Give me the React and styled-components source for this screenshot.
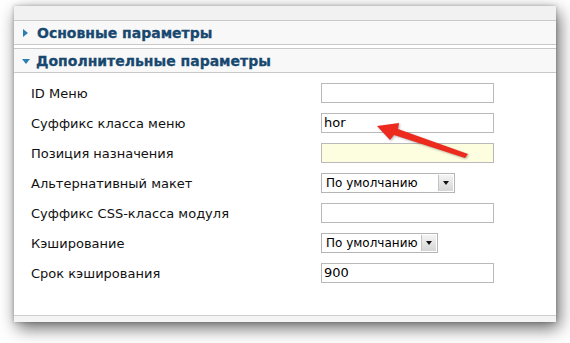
import React from "react";
import styled, { createGlobalStyle } from "styled-components";

const GlobalStyle = createGlobalStyle`
  html, body {
    margin: 0;
    padding: 0;
    background: #ffffff;
  }
  body {
    font-family: "DejaVu Sans", "Liberation Sans", Arial, sans-serif;
  }
`;

const Page = styled.div`
  width: 570px;
  height: 343px;
  padding: 6px 0 0 14px;
  box-sizing: border-box;
  overflow: hidden;
`;

const Panel = styled.div`
  width: 542px;
  height: 316px;
  background: #ffffff;
  display: flex;
  flex-direction: column;
  box-shadow: 3px 6px 16px rgba(0, 0, 0, 0.6), 0 0 4px rgba(0, 0, 0, 0.25);
`;

const TopBar = styled.div`
  height: 14px;
  background: #f1f1f1;
  border-bottom: 1px solid #c9c9c9;
`;

const SectionHeader = styled.div`
  height: 23px;
  background: #f8f8f8;
  border-top: ${(p) => (p.$first ? "none" : "1px solid #c9c9c9")};
  border-bottom: 1px solid #c9c9c9;
  margin-top: ${(p) => (p.$first ? "0" : "3px")};
  display: flex;
  align-items: center;
  padding-left: 8px;
  gap: 6px;
  font-size: 14px;
  font-weight: bold;
  color: #184870;
  -webkit-text-stroke: 0.3px #184870;
`;

const Triangle = styled.span`
  width: 0;
  height: 0;
  ${(p) =>
    p.$open
      ? `border-left: 4px solid transparent;
         border-right: 4px solid transparent;
         border-top: 5px solid #2d7fb0;
         margin: 2px 0 0 0;`
      : `border-top: 4px solid transparent;
         border-bottom: 4px solid transparent;
         border-left: 5px solid #2d7fb0;
         margin: 0 3px 0 1px;`}
`;

const Body = styled.div`
  flex: 1;
  padding: 5px 0 0 17px;
  display: flex;
  flex-direction: column;
  position: relative;
`;

const Row = styled.div`
  height: 30px;
  display: grid;
  grid-template-columns: 290px auto;
  align-items: center;
`;

const Label = styled.span`
  font-size: 13px;
  color: #111;
`;

const TextInput = styled.div`
  width: 173px;
  height: 20px;
  box-sizing: border-box;
  border: 1px solid #b9b9b9;
  background: ${(p) => (p.$yellow ? "#fdfddf" : "#ffffff")};
  font-size: 13px;
  padding: 1px 0 0 2px;
  color: #000;
`;

const Select = styled.div`
  width: ${(p) => p.$width}px;
  height: 20px;
  box-sizing: border-box;
  border: 1px solid #b5b5b5;
  background: #fff;
  display: flex;
  align-items: stretch;
  font-size: 12px;
  color: #000;
`;

const SelectText = styled.span`
  flex: 1;
  padding: 2px 0 0 4px;
  white-space: nowrap;
`;

const SelectButton = styled.span`
  width: 14px;
  margin: 1px;
  background: linear-gradient(#f4f4f4, #d6d6d6);
  border-left: 1px solid #c4c4c4;
  display: flex;
  align-items: center;
  justify-content: center;
  &::after {
    content: "";
    border-left: 3px solid transparent;
    border-right: 3px solid transparent;
    border-top: 4px solid #111;
  }
`;

const BottomBar = styled.div`
  height: 6px;
  background: #f4f4f4;
  border-top: 1px solid #cfcfcf;
`;

const Arrow = styled.svg`
  position: absolute;
  left: 363px;
  top: 50px;
  overflow: visible;
  filter: drop-shadow(1px 1px 1px rgba(0, 0, 0, 0.3));
`;

const fields = [
  { label: "ID Меню", type: "text" },
  { label: "Суффикс класса меню", type: "text", value: "hor" },
  { label: "Позиция назначения", type: "text", yellow: true },
  { label: "Альтернативный макет", type: "select", width: 134 },
  { label: "Суффикс CSS-класса модуля", type: "text" },
  { label: "Кэширование", type: "select", width: 117 },
  { label: "Срок кэширования", type: "text", value: "900" },
];

export default function App() {
  return (
    <>
      <GlobalStyle />
      <Page>
        <Panel>
          <TopBar />
          <SectionHeader $first>
            <Triangle />
            Основные параметры
          </SectionHeader>
          <SectionHeader>
            <Triangle $open />
            Дополнительные параметры
          </SectionHeader>
          <Body>
            {fields.map((f) => (
              <Row key={f.label}>
                <Label>{f.label}</Label>
                {f.type === "select" ? (
                  <Select $width={f.width}>
                    <SelectText>По умолчанию</SelectText>
                    <SelectButton />
                  </Select>
                ) : (
                  <TextInput $yellow={f.yellow}>{f.value}</TextInput>
                )}
              </Row>
            ))}
            <Arrow width="100" height="40" viewBox="0 0 100 40">
              <path
                d="M91 31 L21 6 L22 0 L0 3 L13 17 L17 12 L88 35 Z"
                fill="#ec2a1e"
              />
            </Arrow>
          </Body>
          <BottomBar />
        </Panel>
      </Page>
    </>
  );
}
